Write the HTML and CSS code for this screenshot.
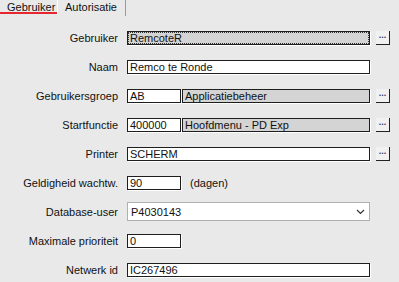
FILE: index.html
```html
<!DOCTYPE html>
<html lang="nl">
<head>
    <meta charset="UTF-8">
    <title>Gebruiker</title>
    <link rel="stylesheet" href="styles.css">
</head>
<body>
    <div class="tabs">
        <div class="tab active">Gebruiker</div>
        <div class="tab">Autorisatie</div>
    </div>

    <div class="form">
        <label>Gebruiker</label>
        <div class="field">
            <span class="input wide readonly focus">RemcoteR</span>
            <span class="dots">...</span>
        </div>

        <label>Naam</label>
        <div class="field">
            <span class="input wide">Remco te Ronde</span>
        </div>

        <label>Gebruikersgroep</label>
        <div class="field">
            <span class="input short">AB</span>
            <span class="input rest readonly">Applicatiebeheer</span>
            <span class="dots">...</span>
        </div>

        <label>Startfunctie</label>
        <div class="field">
            <span class="input short">400000</span>
            <span class="input rest readonly">Hoofdmenu - PD Exp</span>
            <span class="dots">...</span>
        </div>

        <label>Printer</label>
        <div class="field">
            <span class="input wide">SCHERM</span>
            <span class="dots">...</span>
        </div>

        <label>Geldigheid wachtw.</label>
        <div class="field">
            <span class="input short">90</span>
            <span class="unit">(dagen)</span>
        </div>

        <label>Database-user</label>
        <div class="field">
            <span class="select">
                P4030143
                <svg class="chevron" width="9" height="6" viewBox="0 0 9 6"><path d="M1 1l3.5 3.5L8 1" fill="none" stroke="#333" stroke-width="1.2"/></svg>
            </span>
        </div>

        <label>Maximale prioriteit</label>
        <div class="field">
            <span class="input short">0</span>
        </div>

        <label>Netwerk id</label>
        <div class="field">
            <span class="input wide">IC267496</span>
        </div>
    </div>
</body>
</html>
```

FILE: styles.css
```css
body {
    margin: 0;
    background-color: #e9e9e9;
    font-family: 'Liberation Sans', Arial, sans-serif;
    font-size: 11px;
    color: #111;
}
.tabs {
    display: flex;
    height: 16px;
}
.tab {
    padding: 1px 8px 0 7px;
    height: 15px;
    line-height: 13px;
    border-right: 1px solid #9a9a9a;
}
.tab.active {
    width: 42px;
    border-right: 1px solid #fff;
    box-shadow: inset 0 -2px 0 #e8262e;
    height: 13px;
}
.form {
    display: grid;
    grid-template-columns: 118px 1fr;
    grid-auto-rows: 29px;
    column-gap: 9px;
    padding-top: 7px;
}
.form label {
    text-align: right;
    align-self: center;
}
.field {
    display: flex;
    align-items: center;
}
.input {
    box-sizing: border-box;
    height: 14px;
    line-height: 12px;
    padding: 0 2px;
    background-color: #fff;
    border: 1px solid #1e1e1e;
    box-shadow: 1px 1px 0 #fff;
    white-space: nowrap;
    overflow: hidden;
}
.input.wide {
    width: 243px;
}
.input.short {
    width: 54px;
}
.input.rest {
    width: 188px;
    margin-left: 1px;
}
.input.readonly {
    background-color: #d4d4d4;
}
.input.focus {
    outline: 1px dotted #333;
    outline-offset: -2px;
}
.dots {
    box-sizing: border-box;
    width: 14px;
    height: 14px;
    margin-left: 6px;
    background-color: #f1f1f1;
    border-right: 1px solid #222;
    border-bottom: 1px solid #222;
    font-size: 9px;
    line-height: 9px;
    text-align: center;
    color: #3a3a6a;
    font-weight: bold;
}
.unit {
    margin-left: 9px;
}
.select {
    box-sizing: border-box;
    width: 243px;
    height: 19px;
    padding: 0 3px;
    display: flex;
    align-items: center;
    justify-content: space-between;
    background-color: #fff;
    border: 1px solid #b0b0b0;
}
.chevron {
    margin-right: 1px;
}
```
